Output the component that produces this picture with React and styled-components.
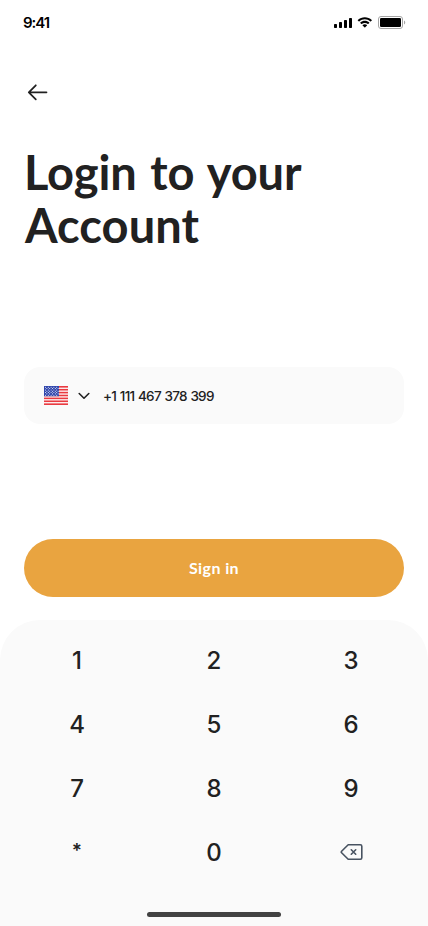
import React from 'react';
import styled, { createGlobalStyle } from 'styled-components';

const GlobalStyle = createGlobalStyle`
  * { box-sizing: border-box; }
  body { margin: 0; background: #fff; color: #212121; font-family: Lato, sans-serif; }
  button { border: 0; padding: 0; background: none; color: inherit; font: inherit; }
`;

const Screen = styled.main`
  display: flex;
  flex-direction: column;
  width: 428px;
  height: 926px;
  overflow: hidden;
  background: #fff;
`;

const StatusBar = styled.header`
  display: flex;
  justify-content: space-between;
  align-items: center;
  height: 44px;
  padding: 0 22px 0 23px;
`;

const Time = styled.span`
  padding-top: 2px;
  font: 600 15px/20px Inter, sans-serif;
  letter-spacing: -1.05px;
  color: #000;
`;

const StatusIcons = styled.svg`
  display: block;
  width: 72px;
  height: 14px;
`;

const NavBar = styled.nav`
  display: flex;
  align-items: center;
  height: 48px;
  margin-top: 24px;
  padding-left: 24px;
`;

const BackButton = styled.button`
  width: 28px;
  height: 28px;
  svg { display: block; }
`;

const Title = styled.h1`
  margin: 30px 24px 0;
  font-size: 47px;
  line-height: 53px;
  font-weight: 700;
`;

const TitleLine = styled.span`
  display: block;
  white-space: nowrap;
  letter-spacing: ${(p) => p.$tracking}px;
  word-spacing: ${(p) => p.$gap || 0}px;
  padding-left: ${(p) => p.$indent || 0}px;
`;

const PhoneField = styled.div`
  display: flex;
  align-items: center;
  height: 57px;
  margin: 115px 24px 0;
  padding: 0 20px;
  border-radius: 16px;
  background: #fafafa;
`;

const Flag = styled.svg`
  display: block;
  width: 24px;
  height: 19px;
  margin-bottom: 1px;
`;

const Chevron = styled.svg`
  width: 12px;
  height: 8px;
  margin: 0 13px 0 10px;
`;

const PhoneNumber = styled.span`
  padding-top: 1px;
  font: 500 13.5px/20px Inter, sans-serif;
  letter-spacing: -0.72px;
  word-spacing: 0.7px;
  white-space: nowrap;
`;

const SignInButton = styled.button`
  height: 58px;
  margin: 115px 24px 0;
  border-radius: 29px;
  background: #e9a440;
  color: #fff;
  font: 700 16px/58px Lato, sans-serif;
  letter-spacing: 0.4px;
`;

const Keyboard = styled.section`
  flex: 1;
  display: flex;
  flex-direction: column;
  align-items: center;
  margin-top: 23px;
  padding-top: 16px;
  border-radius: 40px 40px 0 0;
  background: #fafafa;
`;

const Keys = styled.div`
  display: grid;
  grid-template-columns: repeat(3, 121px);
  grid-auto-rows: 48px;
  gap: 16px;
`;

const Key = styled.button`
  display: grid;
  place-items: center;
  padding: ${(p) => (p.$icon ? '0 0 0 2px' : p.$symbol ? '0 0 2px' : '2px 0 0')};
  font: ${(p) => (p.$symbol ? '600 19px/46px' : '500 24px/46px')} Inter, sans-serif;
`;

const HomeIndicator = styled.div`
  width: 134px;
  height: 5px;
  margin: auto 0 9px;
  border-radius: 3px;
  background: #424242;
`;

const keys = ['1', '2', '3', '4', '5', '6', '7', '8', '9', '*', '0'];
const stripes = [0, 1, 2, 3, 4, 5, 6];
const stars = [0, 1, 2, 3, 4, 5, 6].flatMap((row) =>
  [0, 1, 2, 3, 4].map((col) => [1.5 + col * 2.8 + (row % 2) * 1.4, 1.2 + row * 1.25])
).filter(([x]) => x < 14.5);

export default function App() {
  return (
    <Screen>
      <GlobalStyle />
      <StatusBar>
        <Time>9:41</Time>
        <StatusIcons viewBox="0 0 72 14" aria-label="Signal, Wi-Fi and battery">
          <rect x="0" y="9" width="3" height="4" rx=".7" />
          <rect x="5" y="7" width="3" height="6" rx=".7" />
          <rect x="10" y="5" width="3" height="8" rx=".7" />
          <rect x="15" y="3" width="3" height="10" rx=".7" />
          <path d="M30.8 4.3c2 0 4 .8 5.5 2.2.1.1.3.1.4 0l1.1-1.1c.1-.1.1-.3 0-.4-3.9-3.8-10.1-3.8-14 0-.1.1-.1.3 0 .4l1.1 1.1c.1.1.3.1.4 0 1.5-1.4 3.5-2.2 5.5-2.2Zm0 3.6c1.1 0 2.2.4 3 1.2.1.1.3.1.4 0l1.1-1.1c.1-.1.1-.3 0-.4-2.5-2.4-6.5-2.4-9 0-.1.1-.1.3 0 .4l1.1 1.1c.1.1.3.1.4 0 .8-.8 1.9-1.2 3-1.2Zm2.2 2.5c.1-.1.1-.3 0-.4-1.3-1.1-3.1-1.1-4.4 0-.1.1-.1.3 0 .4l2 2c.1.1.3.1.4 0Z" />
          <rect x="44.5" y="1.5" width="24" height="12" rx="2.5" fill="none" stroke="#a5a5a5" />
          <rect x="46" y="3" width="21" height="9" rx="1.3" />
          <path d="M70 5.5v4c1.7-.8 1.7-3.2 0-4Z" fill="#a5a5a5" />
        </StatusIcons>
      </StatusBar>
      <NavBar>
        <BackButton aria-label="Back">
          <svg width="28" height="28" viewBox="0 0 28 28" fill="none" stroke="#212121" strokeWidth="1.75" strokeLinecap="round" strokeLinejoin="round">
            <path d="M22.5 14.3H4.8M11.8 7.3l-7 7 7 7" />
          </svg>
        </BackButton>
      </NavBar>
      <Title>
        <TitleLine $tracking={-0.1} $gap={2.2}>Login to your</TitleLine>
        <TitleLine $tracking={0.05} $indent={1}>Account</TitleLine>
      </Title>
      <PhoneField>
        <Flag viewBox="0 0 24 18" preserveAspectRatio="none">
          <rect width="24" height="18" fill="#fff" />
          {stripes.map((i) => <rect key={i} y={i * 2.74} width="24" height="1.55" fill="#e93a40" />)}
          <rect width="15" height="9.7" fill="#3147ad" />
          {stars.map(([x, y]) => <circle key={`${x}-${y}`} cx={x} cy={y} r=".5" fill="#fff" />)}
        </Flag>
        <Chevron viewBox="0 0 12 8" fill="none" stroke="#212121" strokeWidth="1.6" strokeLinecap="round" strokeLinejoin="round">
          <path d="m1.2 1.5 4.8 4.7 4.8-4.7" />
        </Chevron>
        <PhoneNumber>+1 111 467 378 399</PhoneNumber>
      </PhoneField>
      <SignInButton>Sign in</SignInButton>
      <Keyboard>
        <Keys>
          {keys.map((key) => <Key key={key} $symbol={key === '*'}>{key}</Key>)}
          <Key $icon aria-label="Delete">
            <svg width="24" height="24" viewBox="0 0 24 24" fill="none" stroke="#475260" strokeWidth="1.6" strokeLinecap="round" strokeLinejoin="round">
              <path d="M8.2 4.8h12.1a1.5 1.5 0 0 1 1.5 1.5v11.4a1.5 1.5 0 0 1-1.5 1.5H8.2l-6.6-6.5a1 1 0 0 1 0-1.4ZM11.3 9.8l4.4 4.4M15.7 9.8l-4.4 4.4" />
            </svg>
          </Key>
        </Keys>
        <HomeIndicator />
      </Keyboard>
    </Screen>
  );
}
